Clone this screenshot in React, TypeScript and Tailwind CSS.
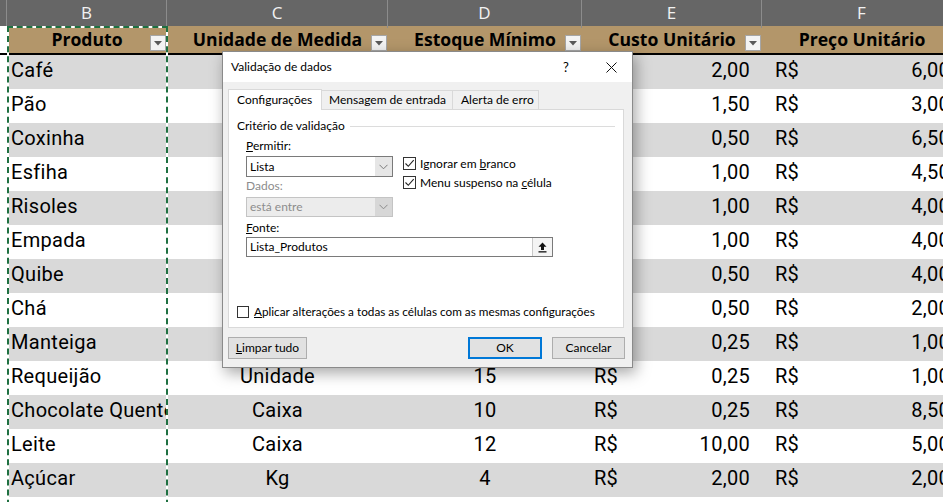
import React from "react";

const rows: [string, string, string, string, string][] = [
  ["Café", "Unidade", "20", "2,00", "6,00"],
  ["Pão", "Unidade", "50", "1,50", "3,00"],
  ["Coxinha", "Unidade", "30", "0,50", "6,50"],
  ["Esfiha", "Unidade", "30", "1,00", "4,50"],
  ["Risoles", "Unidade", "30", "1,00", "4,00"],
  ["Empada", "Unidade", "30", "1,00", "4,00"],
  ["Quibe", "Unidade", "30", "0,50", "4,00"],
  ["Chá", "Unidade", "20", "0,50", "2,00"],
  ["Manteiga", "Unidade", "15", "0,25", "1,00"],
  ["Requeijão", "Unidade", "15", "0,25", "1,00"],
  ["Chocolate Quente", "Caixa", "10", "0,25", "8,50"],
  ["Leite", "Caixa", "12", "10,00", "5,00"],
  ["Açúcar", "Kg", "4", "2,00", "2,00"],
];

const gridCols = "grid grid-cols-[7px_160px_221px_194px_180px_200px]";

function FilterBtn() {
  return (
    <div className="absolute right-[1px] top-[9px] w-[16px] h-[16px] bg-[#f3f3f3] border border-[#a6a6a6] flex items-center justify-center">
      <svg width="8" height="5" viewBox="0 0 8 5">
        <path d="M0 0 H8 L4 4.5 Z" fill="#595959" />
      </svg>
    </div>
  );
}

function Chevron({ color }: { color: string }) {
  return (
    <svg width="9" height="6" viewBox="0 0 9 6">
      <path d="M0.5 0.8 L4.5 4.8 L8.5 0.8" fill="none" stroke={color} strokeWidth="1" />
    </svg>
  );
}

function Check({ checked }: { checked: boolean }) {
  return (
    <div className="w-[13px] h-[13px] border border-[#333333] bg-white flex items-center justify-center shrink-0">
      {checked && (
        <svg width="11" height="11" viewBox="0 0 11 11">
          <path d="M1.5 5.5 L4.3 8.3 L9.7 2.2" fill="none" stroke="#222" strokeWidth="1.1" />
        </svg>
      )}
    </div>
  );
}

export default function App() {
  return (
    <div className="relative w-[943px] h-[502px] overflow-hidden bg-white">
      {/* column letters */}
      <div className={`${gridCols} h-[26px] bg-[#666666] text-[#f2f2f2] text-[17px] font-['Open_Sans',sans-serif]`}>
        {["", "B", "C", "D", "E", "F"].map((l, i) => (
          <div key={i} className="flex items-center justify-center border-r border-[#8c8c8c] pb-[2px]">
            {l}
          </div>
        ))}
      </div>

      {/* table header */}
      <div className={`${gridCols} h-[29px] bg-[#b3966a] border-b-2 border-black font-['Open_Sans',sans-serif] font-bold text-[17.6px] text-black`}>
        <div className="bg-white" />
        {["Produto", "Unidade de Medida", "Estoque Mínimo", "Custo Unitário", "Preço Unitário"].map((h, i) => (
          <div key={i} className="relative flex items-center justify-center whitespace-nowrap">
            {h}
            {i < 4 && <FilterBtn />}
          </div>
        ))}
      </div>

      {/* data rows */}
      <div className="font-['Roboto',sans-serif] text-[20px] tracking-[0.3px] text-black">
        {rows.map((r, i) => (
          <div key={i} className={`${gridCols} h-[34px] ${i % 2 === 0 ? "bg-[#d9d9d9]" : "bg-white"}`}>
            <div className="bg-white" />
            <div className="flex items-center pl-[4px] pb-[5px] overflow-hidden whitespace-nowrap">{r[0]}</div>
            <div className="flex items-center justify-center pb-[5px]">{r[1]}</div>
            <div className="flex items-center justify-center pb-[5px]">{r[2]}</div>
            <div className="flex items-center justify-between px-[12px] pb-[5px]">
              <span>R$</span>
              <span>{r[3]}</span>
            </div>
            <div className="flex items-center justify-between pl-[13px] pr-[12px] pb-[5px]">
              <span>R$</span>
              <span>{r[4]}</span>
            </div>
          </div>
        ))}
        <div className="h-[34px] bg-white" />
      </div>

      {/* copy marquee around column B */}
      <div className="absolute left-[7px] top-[26px] w-[161px] h-[520px] border-2 border-white pointer-events-none">
        <div className="absolute -inset-[2px] border-2 border-dashed border-[#1f7041]" />
      </div>

      {/* dialog */}
      <div className="absolute left-[222px] top-[51px] w-[411px] h-[317px] bg-[#f0f0f0] border border-[#8a8a8a] shadow-[3px_5px_14px_rgba(0,0,0,0.35)] flex flex-col font-['Lato',sans-serif] text-[12px] text-black leading-[16px] whitespace-nowrap">
        <div className="h-[30px] bg-white flex items-center pl-[8px] shrink-0">
          <span>Validação de dados</span>
          <span className="ml-auto w-[20px] text-center text-[13px]">?</span>
          <div className="ml-[25px] mr-[11px] w-[20px] flex items-center justify-center">
            <svg width="11" height="11" viewBox="0 0 11 11">
              <path d="M0.5 0.5 L10.5 10.5 M10.5 0.5 L0.5 10.5" stroke="#111" strokeWidth="1" />
            </svg>
          </div>
        </div>

        <div className="flex flex-col pl-[5px] pr-[7px] pt-[6px]">
          {/* tabs */}
          <div className="flex items-end h-[21px]">
            <div className="w-[94px] h-[21px] bg-white border border-[#d9d9d9] border-b-0 pl-[8px] flex items-center relative z-10 -mb-px">
              Configurações
            </div>
            <div className="w-[131px] h-[19px] bg-[#f0f0f0] border-t border-r border-[#d9d9d9] pl-[7px] flex items-center">
              Mensagem de entrada
            </div>
            <div className="w-[86px] h-[19px] bg-[#f0f0f0] border-t border-r border-[#d9d9d9] pl-[8px] flex items-center">
              Alerta de erro
            </div>
          </div>

          {/* panel */}
          <div className="h-[219px] w-[396px] bg-white border border-[#d9d9d9] flex flex-col px-[8px] pt-[8px]">
            <div className="flex items-center h-[16px] gap-[5px]">
              <span>Critério de validação</span>
              <div className="flex-1 border-t border-[#dcdcdc] mt-[1px]" />
            </div>

            <div className="pl-[9px] flex flex-col">
              <div className="flex">
                <div className="w-[147px] flex flex-col">
                  <div className="mt-[4px] h-[16px]">
                    <span className="underline">P</span>ermitir:
                  </div>
                  <div className="mt-[2px] h-[21px] border border-[#7a7a7a] bg-white flex items-stretch">
                    <div className="flex-1 flex items-center pl-[3px]">Lista</div>
                    <div className="w-[17px] bg-[#e6e6e6] flex items-center justify-center">
                      <Chevron color="#7a7a7a" />
                    </div>
                  </div>
                  <div className="mt-[1px] h-[16px] text-[#8c8c8c]">Dados:</div>
                  <div className="mt-[3px] h-[20px] border border-[#c4c4c4] bg-[#ececec] flex items-stretch">
                    <div className="flex-1 flex items-center pl-[3px] text-[#8c8c8c]">está entre</div>
                    <div className="w-[17px] bg-[#d7d7d7] flex items-center justify-center">
                      <Chevron color="#8a8a8a" />
                    </div>
                  </div>
                </div>
                <div className="ml-[10px] pt-[23px] flex flex-col gap-[6px]">
                  <div className="flex items-center gap-[4px] h-[13px]">
                    <Check checked />
                    <span>
                      Ignorar em <span className="underline">b</span>ranco
                    </span>
                  </div>
                  <div className="flex items-center gap-[4px] h-[13px]">
                    <Check checked />
                    <span>
                      Menu suspenso na <span className="underline">c</span>élula
                    </span>
                  </div>
                </div>
              </div>

              <div className="mt-[3px] h-[16px]">
                <span className="underline">F</span>onte:
              </div>
              <div className="mt-[1px] w-[307px] h-[20px] border border-[#7a7a7a] bg-white flex items-stretch">
                <div className="flex-1 flex items-center pl-[3px]">Lista_Produtos</div>
                <div className="w-[20px] border-l border-[#c8c8c8] bg-[#f4f4f4] flex items-center justify-center">
                  <svg width="9" height="11" viewBox="0 0 9 11">
                    <path d="M4.5 0.5 L8.5 4.8 L6 4.8 L6 8 L3 8 L3 4.8 L0.5 4.8 Z" fill="#111" />
                    <rect x="0.5" y="9.2" width="8" height="1.3" fill="#111" />
                  </svg>
                </div>
              </div>
            </div>

            <div className="mt-[47px] flex items-center gap-[5px]">
              <div className="w-[12px] h-[12px] border border-[#333333] bg-white" />
              <span className="text-[11.75px]">
                <span className="underline">A</span>plicar alterações a todas as células com as mesmas configurações
              </span>
            </div>
          </div>

          {/* buttons */}
          <div className="mt-[9px] flex h-[22px]">
            <div className="w-[79px] bg-[#e1e1e1] border border-[#adadad] flex items-center justify-center">
              <span>
                <span className="underline">L</span>impar tudo
              </span>
            </div>
            <div className="ml-auto w-[74px] bg-[#e1e1e1] border-2 border-[#0078d7] flex items-center justify-center">
              OK
            </div>
            <div className="ml-[10px] w-[73px] bg-[#e1e1e1] border border-[#adadad] flex items-center justify-center">
              Cancelar
            </div>
          </div>
        </div>
      </div>
    </div>
  );
}
